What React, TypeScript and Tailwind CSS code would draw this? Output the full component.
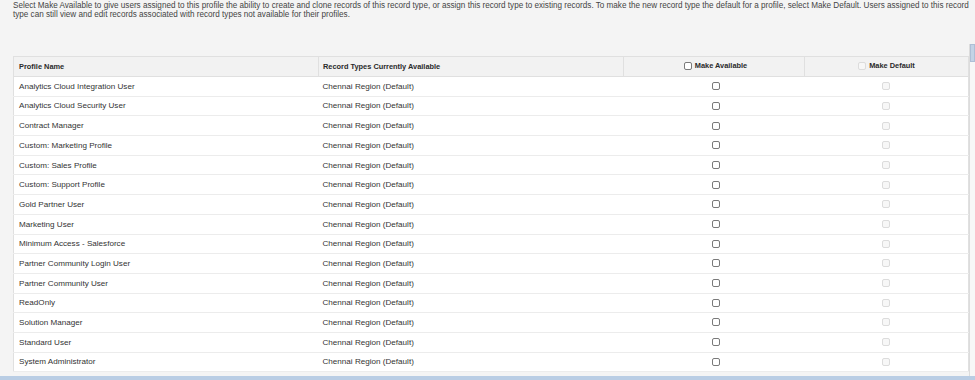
import React from 'react';

const profiles = [
  'Analytics Cloud Integration User',
  'Analytics Cloud Security User',
  'Contract Manager',
  'Custom: Marketing Profile',
  'Custom: Sales Profile',
  'Custom: Support Profile',
  'Gold Partner User',
  'Marketing User',
  'Minimum Access - Salesforce',
  'Partner Community Login User',
  'Partner Community User',
  'ReadOnly',
  'Solution Manager',
  'Standard User',
  'System Administrator',
];

const Box: React.FC<{ disabled?: boolean }> = ({ disabled }) => (
  <span
    className={`inline-block w-[8px] h-[8px] rounded-[2px] border align-middle ${
      disabled ? 'border-[#dcdcdc] bg-[#f7f7f7]' : 'border-[#7a7a7a] bg-white'
    }`}
  />
);

const App: React.FC = () => {
  return (
    <div
      className="w-[975px] h-[380px] overflow-hidden bg-[#f4f4f4] flex flex-col text-[#333]"
      style={{ fontFamily: '"Liberation Sans", Arial, sans-serif' }}
    >
      <div className="flex flex-1 min-h-0">
        <div className="flex-1 min-w-0">
          <p className="pl-[13px] pt-[2px] text-[8.15px] leading-[8.5px] text-[#444]">
            Select Make Available to give users assigned to this profile the ability to create and clone records of this record type, or assign this record type to existing records. To make the new record type the default for a profile, select Make Default. Users assigned to this record type can still view and edit records associated with record types not available for their profiles.
          </p>

          <table className="ml-[13px] mt-[37px] w-[955px] table-fixed border-collapse bg-white border border-[#e0e0e0] text-[8.1px]">
            <colgroup>
              <col className="w-[305px]" />
              <col className="w-[305px]" />
              <col className="w-[181px]" />
              <col className="w-[164px]" />
            </colgroup>
            <thead>
              <tr className="h-[20px] bg-[#f2f2f2] text-[#2a2a2a] font-bold text-[7.4px]">
                <th className="text-left px-[5px] border-r border-[#e0e0e0] border-b">Profile Name</th>
                <th className="text-left px-[4px] border-r border-[#e0e0e0] border-b">Record Types Currently Available</th>
                <th className="border-r border-[#e0e0e0] border-b">
                  <span className="inline-flex items-center gap-[3px] pl-[3px]">
                    <Box />
                    Make Available
                  </span>
                </th>
                <th className="border-b border-[#e0e0e0]">
                  <span className="inline-flex items-center gap-[3px]">
                    <Box disabled />
                    Make Default
                  </span>
                </th>
              </tr>
            </thead>
            <tbody>
              {profiles.map((name) => (
                <tr key={name} className="h-[19.7px] border-b border-[#ececec]">
                  <td className="px-[5px] pt-[1px] whitespace-nowrap">{name}</td>
                  <td className="px-[4px] pt-[1px] whitespace-nowrap">Chennai Region (Default)</td>
                  <td className="text-center pl-[3px]">
                    <Box />
                  </td>
                  <td className="text-center">
                    <Box disabled />
                  </td>
                </tr>
              ))}
            </tbody>
          </table>
        </div>

        <div className="w-[6px] mt-[44px] border-l border-[#dcdcdc] bg-[#f7f7f7]">
          <div className="h-[18px] bg-[#c3d3e6] border border-[#aebfd6]" />
        </div>
      </div>
      <div className="h-[4px] bg-[#b9cde4]" />
    </div>
  );
};

export default App;
